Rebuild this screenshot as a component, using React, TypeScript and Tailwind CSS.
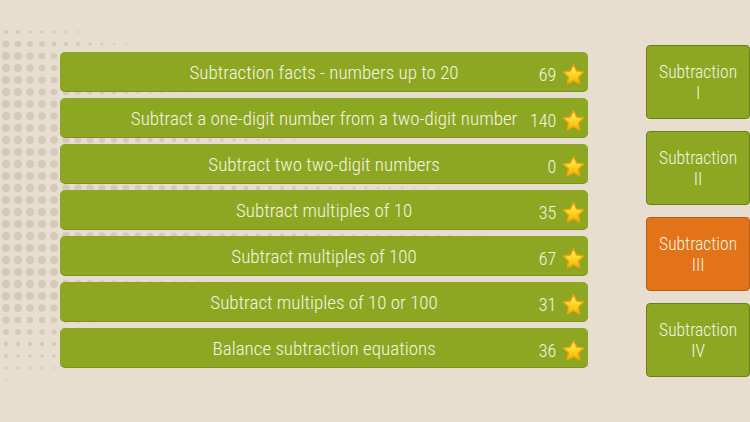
import React from "react";

const topics = [
  { title: "Subtraction facts - numbers up to 20", score: 69 },
  { title: "Subtract a one-digit number from a two-digit number", score: 140 },
  { title: "Subtract two two-digit numbers", score: 0 },
  { title: "Subtract multiples of 10", score: 35 },
  { title: "Subtract multiples of 100", score: 67 },
  { title: "Subtract multiples of 10 or 100", score: 31 },
  { title: "Balance subtraction equations", score: 36 },
];

const levels = ["I", "II", "III", "IV"];

// halftone wave behind the lists
function DotField() {
  const dots: { x: number; y: number; r: number }[] = [];
  for (let y = 8; y < 422; y += 12) {
    for (let x = 6; x < 660; x += 12) {
      const reach = 150 + 500 * Math.exp(-Math.pow((y - 235) / 110, 2));
      let r = 4.4 * Math.pow(Math.max(0, 1 - x / reach), 1.1);
      if (y < 50) r *= Math.max(0, (y - 14) / 36);
      if (y > 300) r *= Math.max(0, (400 - y) / 100);
      if (r < 0.7) continue;
      dots.push({ x, y, r });
    }
  }
  return (
    <svg className="absolute inset-0" width={750} height={422}>
      {dots.map((d, i) => (
        <circle key={i} cx={d.x} cy={d.y} r={d.r} fill="#d3cabc" />
      ))}
    </svg>
  );
}

function Star() {
  return (
    <svg width={25} height={24} viewBox="0 0 24 24">
      <defs>
        <linearGradient id="starFill" x1="0" y1="0" x2="0" y2="1">
          <stop offset="0" stopColor="#fff27a" />
          <stop offset="0.55" stopColor="#ffd21f" />
          <stop offset="1" stopColor="#f4ad0c" />
        </linearGradient>
      </defs>
      <path
        d="M12 1.6l3.1 6.4 7 1-5.1 4.9 1.2 7-6.2-3.3-6.2 3.3 1.2-7L1.9 9l7-1z"
        fill="url(#starFill)"
        stroke="#eaa60c"
        strokeWidth="1.3"
        strokeLinejoin="round"
      />
    </svg>
  );
}

export default function App() {
  return (
    <div className="relative h-[422px] w-[750px] overflow-hidden bg-[#e7decf] font-['Roboto_Condensed','Open_Sans',sans-serif] font-light">
      <DotField />
      <div className="relative flex">
        <div className="ml-[60px] mt-[52px] flex w-[529px] flex-col gap-[7px]">
          {topics.map((t) => (
            <div
              key={t.title}
              className="grid h-[39px] grid-cols-[1fr_auto_1fr] items-center rounded-[5px] bg-[#8ea722] text-[#f4f5e2] shadow-[0_1px_0_#7d931c]"
            >
              <span />
              <span className="whitespace-nowrap pt-[1px] text-[19px] leading-none">{t.title}</span>
              <span className="flex items-center justify-end gap-[5px] pr-[2px] pt-[7px]">
                <span className="text-[18px] leading-none">{t.score}</span>
                <Star />
              </span>
            </div>
          ))}
        </div>
        <div className="ml-[58px] mt-[45px] flex w-[104px] flex-col gap-[12px]">
          {levels.map((l) => (
            <div
              key={l}
              className={`flex h-[74px] flex-col items-center justify-center rounded-[4px] border pt-[2px] text-[17.5px] leading-[21px] text-[#f4f5e2] ${
                l === "III" ? "border-[#b95b10] bg-[#e27318]" : "border-[#6c7f17] bg-[#8ea722]"
              }`}
            >
              <span>Subtraction</span>
              <span>{l}</span>
            </div>
          ))}
        </div>
      </div>
    </div>
  );
}
